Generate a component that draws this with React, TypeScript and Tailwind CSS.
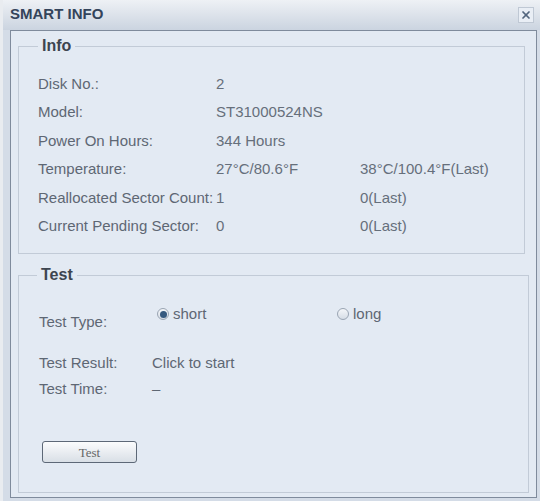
import { X } from 'lucide-react';

const INFO_ROWS = [
  { label: 'Disk No.:', value: '2', last: '' },
  { label: 'Model:', value: 'ST31000524NS', last: '' },
  { label: 'Power On Hours:', value: '344 Hours', last: '' },
  { label: 'Temperature:', value: '27°C/80.6°F', last: '38°C/100.4°F(Last)' },
  { label: 'Reallocated Sector Count:', value: '1', last: '0(Last)' },
  { label: 'Current Pending Sector:', value: '0', last: '0(Last)' },
];

const Radio = ({ checked, label }: { checked?: boolean; label: string }) => (
  <label className="flex items-center gap-[4px] cursor-pointer">
    <span className="w-[12px] h-[12px] rounded-full border border-[#9aa5b3] bg-gradient-to-b from-[#f4f6f9] to-[#d6dde6] flex items-center justify-center">
      {checked && <span className="w-[7px] h-[7px] rounded-full bg-[#35597f]" />}
    </span>
    <span>{label}</span>
  </label>
);

export default function App() {
  return (
    <div
      className="w-[540px] h-[501px] flex flex-col bg-[#d4dce7] border-l-[3px] border-[#e9ecf0] text-[15px] text-[#5e6773]"
      style={{ fontFamily: '"Liberation Sans", Arial, sans-serif' }}
    >
      {/* title bar */}
      <div className="h-[30px] shrink-0 flex items-center justify-between pl-[7px] pr-[6px] bg-gradient-to-b from-[#eef1f5] to-[#cbd4e0]">
        <span className="font-bold text-[15px] text-[#34445b] -mt-[2px]">SMART INFO</span>
        <button className="w-[16px] h-[16px] -mt-[1px] flex items-center justify-center bg-[#e9eef5] border border-[#bfc8d4] text-[#52657d]">
          <X size={12} strokeWidth={3.5} />
        </button>
      </div>

      {/* body */}
      <div className="flex-1 ml-[7px] mr-[3px] mb-[3px] border border-[#7f8b9c] bg-[#e3eaf3] flex flex-col px-[7px]">
        <fieldset className="mt-[6px] mr-[4px] border border-[#c2cbd7] pl-[19px] pr-[10px] pb-[13px]">
          <legend className="px-[4px] font-bold text-[16px] leading-[18px] text-[#3d4550]">Info</legend>
          <div className="grid grid-cols-[178px_144px_1fr] mt-[15px]">
            {INFO_ROWS.map((r) => (
              <div key={r.label} className="contents leading-[28.4px]">
                <span className="whitespace-nowrap">{r.label}</span>
                <span className="whitespace-nowrap text-[#666f7b]">{r.value}</span>
                <span className="whitespace-nowrap text-[#666f7b]">{r.last}</span>
              </div>
            ))}
          </div>
        </fieldset>

        <fieldset className="mt-[12px] mb-[4px] flex-1 border border-[#c2cbd7] pl-[20px] pr-[10px]">
          <legend className="-ml-[2px] px-[4px] font-bold text-[16px] leading-[18px] text-[#3d4550]">Test</legend>
          <div className="flex items-start mt-[16px]">
            <span className="w-[118px] pt-[8px] leading-[28px]">Test Type:</span>
            <div className="w-[180px] leading-[28px]">
              <Radio checked label="short" />
            </div>
            <div className="leading-[28px]">
              <Radio label="long" />
            </div>
          </div>
          <div className="flex mt-[14px] leading-[26px]">
            <span className="w-[113px]">Test Result:</span>
            <span>Click to start</span>
          </div>
          <div className="flex leading-[26px]">
            <span className="w-[113px]">Test Time:</span>
            <span>–</span>
          </div>
          <button
            className="mt-[39px] ml-[3px] w-[95px] h-[22px] rounded-[3px] border border-[#5d6877] bg-gradient-to-b from-[#fbfcfd] to-[#d9dfe6] text-[13px] text-[#666]"
            style={{ fontFamily: '"Liberation Serif", "Times New Roman", serif' }}
          >
            Test
          </button>
        </fieldset>
      </div>
    </div>
  );
}
